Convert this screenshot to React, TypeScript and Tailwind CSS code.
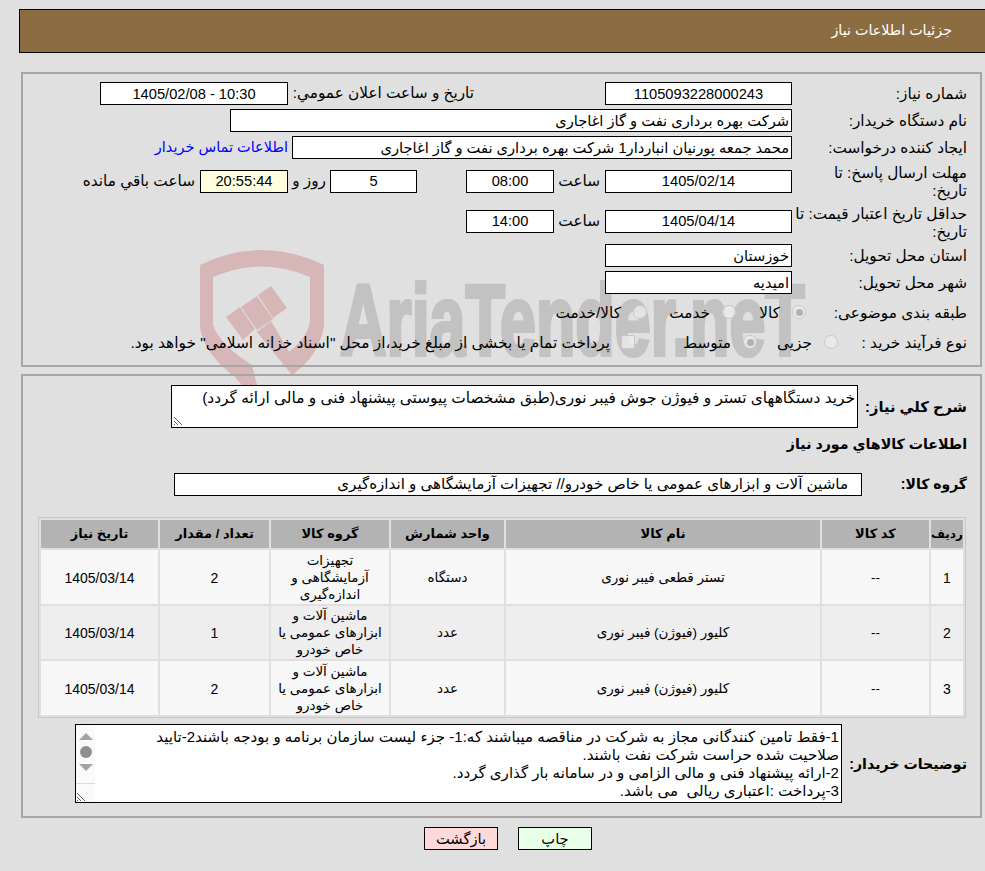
import React from "react";

const FONT = "font-['Liberation_Sans','DejaVu_Sans',sans-serif]";

const Box: React.FC<{ className?: string; children?: React.ReactNode }> = ({ className, children }) => (
  <div className={`flex items-center justify-center h-[23px] border border-black bg-white text-[14.67px] shrink-0 ${className ?? ""}`}>
    {children}
  </div>
);

const Label: React.FC<{ children: React.ReactNode; className?: string }> = ({ children, className }) => (
  <div className={`shrink-0 text-[15.3px] leading-[18px] ${className ?? "w-[175px]"}`}>{children}</div>
);

const Radio: React.FC<{ checked?: boolean; label: string; w: string }> = ({ checked, label, w }) => (
  <div className={`flex items-center shrink-0 ${w}`}>
    <span className="w-[14px] h-[14px] rounded-full border border-[#c8c8c8] bg-[#ebebeb]/80 flex items-center justify-center shrink-0">
      {checked && <span className="w-[7px] h-[7px] rounded-full bg-[#b0b0b0]" />}
    </span>
    <span className="mr-[12px] pt-[2px] text-[15.3px] whitespace-nowrap">{label}</span>
  </div>
);

const rows = [
  { n: "1", name: "تستر قطعی فیبر نوری", unit: "دستگاه", group: "تجهیزات آزمایشگاهی و اندازه‌گیری", qty: "2", bg: "bg-[#f7f7f7]", h: "h-[54px]" },
  { n: "2", name: "کلیور (فیوژن) فیبر نوری", unit: "عدد", group: "ماشین آلات و ابزارهای عمومی یا خاص خودرو", qty: "1", bg: "bg-[#eeeeee]", h: "h-[53px]" },
  { n: "3", name: "کلیور (فیوژن) فیبر نوری", unit: "عدد", group: "ماشین آلات و ابزارهای عمومی یا خاص خودرو", qty: "2", bg: "bg-[#f7f7f7]", h: "h-[54px]" },
];

const Grip = () => (
  <svg width="10" height="10" viewBox="0 0 10 10" stroke="#666" fill="none">
    <path d="M1 1 L9 9 M1 5 L5 9 M1 8 L2 9" />
  </svg>
);

export default function App() {
  return (
    <div dir="rtl" className={`relative w-[985px] h-[871px] overflow-hidden bg-[#e0e0e0] text-black ${FONT}`}>
      {/* watermark */}
      <div dir="ltr" className="absolute left-[200px] top-[250px] flex items-start pointer-events-none">
        <svg width="125" height="136" viewBox="0 0 125 136" fill="#d6b6b6" className="shrink-0">
          <path d="M0 15 Q62 -15 124 15 V75 Q120 105 92 125 L84 105 Q108 90 110 70 V27 Q62 6 13 27 V75 Q20 95 52 115 L57 135 L42 135 L35 127 Q5 105 0 78 Z" />
          <path d="M26 67 L40 57 L55 79 L43 90 Z M41 57 L57 46 L73 69 L57 80 Z M58 45 L71 36 L87 58 L73 68 Z" />
          <path d="M57 82 L71 71 L95 112 L92 125 Z" />
        </svg>
        <span className="ml-[15px] mt-[20px] text-[#c2c2c2] font-bold text-[100px] leading-[100px] whitespace-nowrap origin-top-left scale-x-[0.645] [-webkit-text-stroke:4px_#c2c2c2] font-['Liberation_Sans',sans-serif]">
          AriaTender.neT
        </span>
      </div>

      <div className="relative flex flex-col pt-[9px]">
        {/* header */}
        <div className="ml-[19px] mr-[-1px] h-[44px] flex items-center bg-[#8c6d42] border border-black text-white text-[14.3px] pr-[33px]">
          جزئیات اطلاعات نیاز
        </div>

        {/* main panel */}
        <div className="mt-[19px] mr-[3px] w-[961px] h-[295px] border-2 border-[#a6a6a6] pr-[13px] pt-[8px]">
          <div className="flex items-center">
            <Label>شماره نياز:</Label>
            <Box className="w-[187px]">1105093228000243</Box>
            <div className="w-[131px] shrink-0" />
            <div className="w-[186px] shrink-0 text-[15.3px] whitespace-nowrap">تاريخ و ساعت اعلان عمومي:</div>
            <Box className="w-[188px]">10:30 - 1405/02/08</Box>
          </div>
          <div className="flex items-center mt-[4px]">
            <Label>نام دستگاه خریدار:</Label>
            <Box className="w-[562px] !justify-start pr-[2px]">شرکت بهره برداری نفت و گاز اغاجاری</Box>
          </div>
          <div className="flex items-center mt-[4px]">
            <Label>ایجاد کننده درخواست:</Label>
            <Box className="w-[500px] !justify-start pr-[2px]">محمد جمعه پورنیان انباردار1 شرکت بهره برداری نفت و گاز اغاجاری</Box>
            <a className="mr-[4px] text-[14.5px] text-[#0000ff] whitespace-nowrap">اطلاعات تماس خریدار</a>
          </div>
          <div className="flex items-center mt-[4px] h-[36px]">
            <Label className="w-[175px] pt-[1px]">
              مهلت ارسال پاسخ: تا
              <br />
              تاریخ:
            </Label>
            <Box className="w-[187px]">1405/02/14</Box>
            <span className="w-[51px] shrink-0 pr-[5px] text-[15.3px]">ساعت</span>
            <Box className="w-[88px]">08:00</Box>
            <span className="w-[49px] shrink-0" />
            <Box className="w-[87px]">5</Box>
            <span className="w-[42px] shrink-0 pr-[4px] text-[15.3px] whitespace-nowrap">روز و</span>
            <Box className="w-[88px] !bg-[#ffffe0]">20:55:44</Box>
            <span className="mr-[5px] text-[15.3px] whitespace-nowrap">ساعت باقي مانده</span>
          </div>
          <div className="flex items-center mt-[4px] h-[36px]">
            <Label className="w-[175px] pt-[3px]">حداقل تاریخ اعتبار قیمت: تا تاریخ:</Label>
            <Box className="w-[187px]">1405/04/14</Box>
            <span className="w-[51px] shrink-0 pr-[5px] text-[15.3px]">ساعت</span>
            <Box className="w-[88px]">14:00</Box>
          </div>
          <div className="flex items-center mt-[5px]">
            <Label>استان محل تحویل:</Label>
            <Box className="w-[187px] !justify-start pr-[2px]">خوزستان</Box>
          </div>
          <div className="flex items-center mt-[4px]">
            <Label>شهر محل تحویل:</Label>
            <Box className="w-[187px] !justify-start pr-[2px]">امیدیه</Box>
          </div>
          <div className="flex items-center mt-[7px] h-[22px]">
            <Label className="w-[161px] pt-[2px]">طبقه بندی موضوعی:</Label>
            <Radio checked label="کالا" w="w-[70px]" />
            <Radio label="خدمت" w="w-[89px]" />
            <Radio label="کالا/خدمت" w="w-[110px]" />
          </div>
          <div className="flex items-center mt-[8px] h-[22px]">
            <Label className="w-[129px] pt-[2px]">نوع فرآیند خرید :</Label>
            <Radio label="جزیی" w="w-[81px]" />
            <Radio checked label="متوسط" w="w-[122px]" />
            <span className="w-[14px] h-[14px] rounded-[2px] border border-[#c8c8c8] bg-[#ebebeb]/80 shrink-0" />
            <span className="mr-[11px] pt-[2px] text-[15.4px] whitespace-nowrap">پرداخت تمام یا بخشی از مبلغ خرید،از محل "اسناد خزانه اسلامی" خواهد بود.</span>
          </div>
        </div>

        {/* details panel */}
        <div className="mt-[7px] mr-[3px] w-[961px] h-[444px] border-2 border-[#a6a6a6] pr-[13px] pt-[9px]">
          <div className="flex items-center">
            <div className="w-[109px] shrink-0 text-[14.67px] font-bold">شرح كلي نياز:</div>
            <div className="relative w-[687px] h-[43px] border border-black bg-white text-[15.4px] leading-[18px] pr-[2px] pt-[3px] shrink-0">
              خرید دستگاههای تستر و فیوژن جوش فیبر نوری(طبق مشخصات پیوستی پیشنهاد فنی و مالی ارائه گردد)
              <span className="absolute left-[1px] bottom-[1px] flex">
                <Grip />
              </span>
            </div>
          </div>
          <div className="mt-[6px] h-[20px] text-[14.2px] font-bold leading-[20px]">اطلاعات كالاهاي مورد نياز</div>
          <div className="flex items-center mt-[19px]">
            <div className="w-[105px] shrink-0 text-[14px] font-bold">گروه کالا:</div>
            <Box className="w-[688px] !justify-start pr-[13px] !text-[15.1px]">ماشین آلات و ابزارهای عمومی یا خاص خودرو// تجهیزات آزمایشگاهی و اندازه‌گیری</Box>
          </div>
          <table className="mt-[21px] mr-[1px] w-[928px] table-fixed border-separate border-spacing-[2px] border border-[#c8c8c8] text-[13.5px]">
            <thead>
              <tr className="h-[28px] bg-[#b3b3b3] text-[13px]">
                <th className="w-[32px] font-bold text-[12px] p-0">ردیف</th>
                <th className="w-[107px] font-bold">کد کالا</th>
                <th className="w-[314px] font-bold">نام کالا</th>
                <th className="w-[113px] font-bold">واحد شمارش</th>
                <th className="w-[118px] font-bold">گروه کالا</th>
                <th className="w-[109px] font-bold">تعداد / مقدار</th>
                <th className="font-bold">تاریخ نیاز</th>
              </tr>
            </thead>
            <tbody>
              {rows.map((r) => (
                <tr key={r.n} className={`${r.h} text-center ${r.bg}`}>
                  <td className="text-[14px] pt-[2px]">{r.n}</td>
                  <td className="pt-[2px]">--</td>
                  <td className="pt-[2px]">{r.name}</td>
                  <td className="pt-[2px]">{r.unit}</td>
                  <td className="leading-[17px] px-[4px]">{r.group}</td>
                  <td className="text-[14px] pt-[2px]">{r.qty}</td>
                  <td className="text-[14px] pt-[2px]">1405/03/14</td>
                </tr>
              ))}
            </tbody>
          </table>
          <div className="flex items-center mt-[6px]">
            <div className="w-[125px] shrink-0 text-[14.2px] font-bold pt-[2px]">توضیحات خریدار:</div>
            <div className="relative flex w-[767px] h-[79px] border border-black bg-white shrink-0">
              <div className="flex-1 pr-[2px] pl-[30px] text-[15.07px] leading-[18px] pt-[3px] overflow-hidden">
                1-فقط تامین کنندگانی مجاز به شرکت در مناقصه میباشند که:1- جزء لیست سازمان برنامه و بودجه باشند2-تایید صلاحیت شده حراست شرکت نفت باشند.
                <br />
                2-ارائه پیشنهاد فنی و مالی الزامی و در سامانه بار گذاری گردد.
                <br />
                3-پرداخت :اعتباری ریالی&nbsp; می باشد.
              </div>
              <div className="w-[19px] shrink-0 bg-[#fafafa] flex flex-col items-center pt-[8px]">
                <span className="w-0 h-0 border-x-[7px] border-x-transparent border-b-[7px] border-b-[#a3a3a3]" />
                <span className="mt-[6px] w-[12px] h-[12px] rounded-full bg-[#8f8f8f]" />
                <span className="mt-[6px] w-0 h-0 border-x-[7px] border-x-transparent border-t-[7px] border-t-[#a3a3a3]" />
                <div className="mt-auto w-full h-[19px] border-t border-[#dcdcdc] flex items-end justify-end">
                  <Grip />
                </div>
              </div>
            </div>
          </div>
        </div>

        {/* buttons */}
        <div className="flex gap-[20px] mt-[9px] pr-[393px]">
          <button className="w-[74px] h-[23px] border border-black bg-[#e8ffe8] text-[14.67px]">چاپ</button>
          <button className="w-[74px] h-[23px] border border-black bg-[#ffd9d9] text-[14.67px]">بازگشت</button>
        </div>
      </div>
    </div>
  );
}
